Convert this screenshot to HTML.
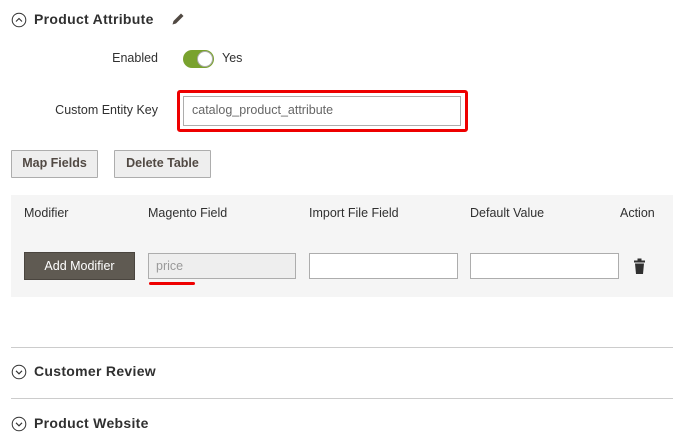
<!DOCTYPE html>
<html><head><meta charset="utf-8"><style>
*{margin:0;padding:0;box-sizing:border-box}
body{width:686px;height:447px;background:#fff;font-family:"Liberation Sans",sans-serif;color:#303030;position:relative;overflow:hidden;font-size:12.5px}
.a{position:absolute}
.h{font-weight:bold;font-size:14px;color:#303030;letter-spacing:0.3px}
.lbl{font-size:12.5px;color:#303030;text-align:right;width:150px}
.btn{position:absolute;border:1px solid #adadad;background:#eeeeee;font-weight:bold;font-size:12.5px;color:#514943;text-align:center;line-height:25px;border-radius:1px}
.inp{position:absolute;border:1px solid #adadad;background:#fff}
.th{position:absolute;top:206px;font-size:12.5px;color:#303030}
.line{position:absolute;left:11px;width:662px;height:1px;background:#cccccc}
</style></head><body>
<svg class="a" style="left:11px;top:12px" width="16" height="16" viewBox="0 0 16 16"><circle cx="8" cy="8" r="6.8" fill="none" stroke="#303030" stroke-width="1"/><path d="M5 9.5L8 6.5L11 9.5" fill="none" stroke="#303030" stroke-width="1.1"/></svg>
<div class="a h" style="left:34px;top:11px">Product Attribute</div>
<svg class="a" style="left:171px;top:12px" width="14" height="14" viewBox="0 0 14 14"><path d="M1.5 12.5L2.5 9L10 1.5L12.5 4L5 11.5Z" fill="#514943"/></svg>
<div class="a lbl" style="left:8px;top:51px">Enabled</div>
<div class="a" style="left:183px;top:50px;width:31px;height:18px;border-radius:9px;background:#79a22e"></div>
<div class="a" style="left:197px;top:51px;width:16px;height:16px;border-radius:8px;background:#fff;border:1px solid #adadad"></div>
<div class="a" style="left:222px;top:51px">Yes</div>
<div class="a lbl" style="left:8px;top:103px">Custom Entity Key</div>
<div class="a" style="left:177px;top:90px;width:291px;height:42px;border:3px solid #ee0000;border-radius:3px"></div>
<div class="inp" style="left:183px;top:96px;width:278px;height:30px"></div>
<div class="a" style="left:192px;top:103px;color:#666">catalog_product_attribute</div>
<div class="btn" style="left:11px;top:150px;width:87px;height:28px">Map Fields</div>
<div class="btn" style="left:114px;top:150px;width:97px;height:28px">Delete Table</div>
<div class="a" style="left:11px;top:195px;width:662px;height:102px;background:#f5f5f5"></div>
<div class="th" style="left:24px">Modifier</div>
<div class="th" style="left:148px">Magento Field</div>
<div class="th" style="left:309px">Import File Field</div>
<div class="th" style="left:470px">Default Value</div>
<div class="th" style="left:620px">Action</div>
<div class="a" style="left:24px;top:252px;width:111px;height:28px;background:#5f5a52;border:1px solid #4a453f;color:#fff;text-align:center;line-height:26px;font-size:12.5px">Add Modifier</div>
<div class="inp" style="left:148px;top:253px;width:148px;height:26px;background:#eeeeee"></div>
<div class="a" style="left:156px;top:259px;color:#999">price</div>
<div class="a" style="left:149px;top:282px;width:46px;height:3px;background:#ee0000;border-radius:2px"></div>
<div class="inp" style="left:309px;top:253px;width:149px;height:26px"></div>
<div class="inp" style="left:470px;top:253px;width:149px;height:26px"></div>
<svg class="a" style="left:633px;top:258px" width="13" height="17" viewBox="0 0 13 17"><rect x="4.5" y="0.5" width="4" height="2" fill="#303030"/><rect x="1" y="2.5" width="11" height="2" fill="#303030"/><path d="M2 5.5H11L10 16H3Z" fill="#303030"/></svg>
<div class="line" style="top:347px"></div>
<svg class="a" style="left:11px;top:364px" width="16" height="16" viewBox="0 0 16 16"><circle cx="8" cy="8" r="6.8" fill="none" stroke="#303030" stroke-width="1"/><path d="M5 6.8L8 9.8L11 6.8" fill="none" stroke="#303030" stroke-width="1.1"/></svg>
<div class="a h" style="left:34px;top:363px">Customer Review</div>
<div class="line" style="top:398px"></div>
<svg class="a" style="left:11px;top:416px" width="16" height="16" viewBox="0 0 16 16"><circle cx="8" cy="8" r="6.8" fill="none" stroke="#303030" stroke-width="1"/><path d="M5 6.8L8 9.8L11 6.8" fill="none" stroke="#303030" stroke-width="1.1"/></svg>
<div class="a h" style="left:34px;top:415px">Product Website</div>
</body></html>
